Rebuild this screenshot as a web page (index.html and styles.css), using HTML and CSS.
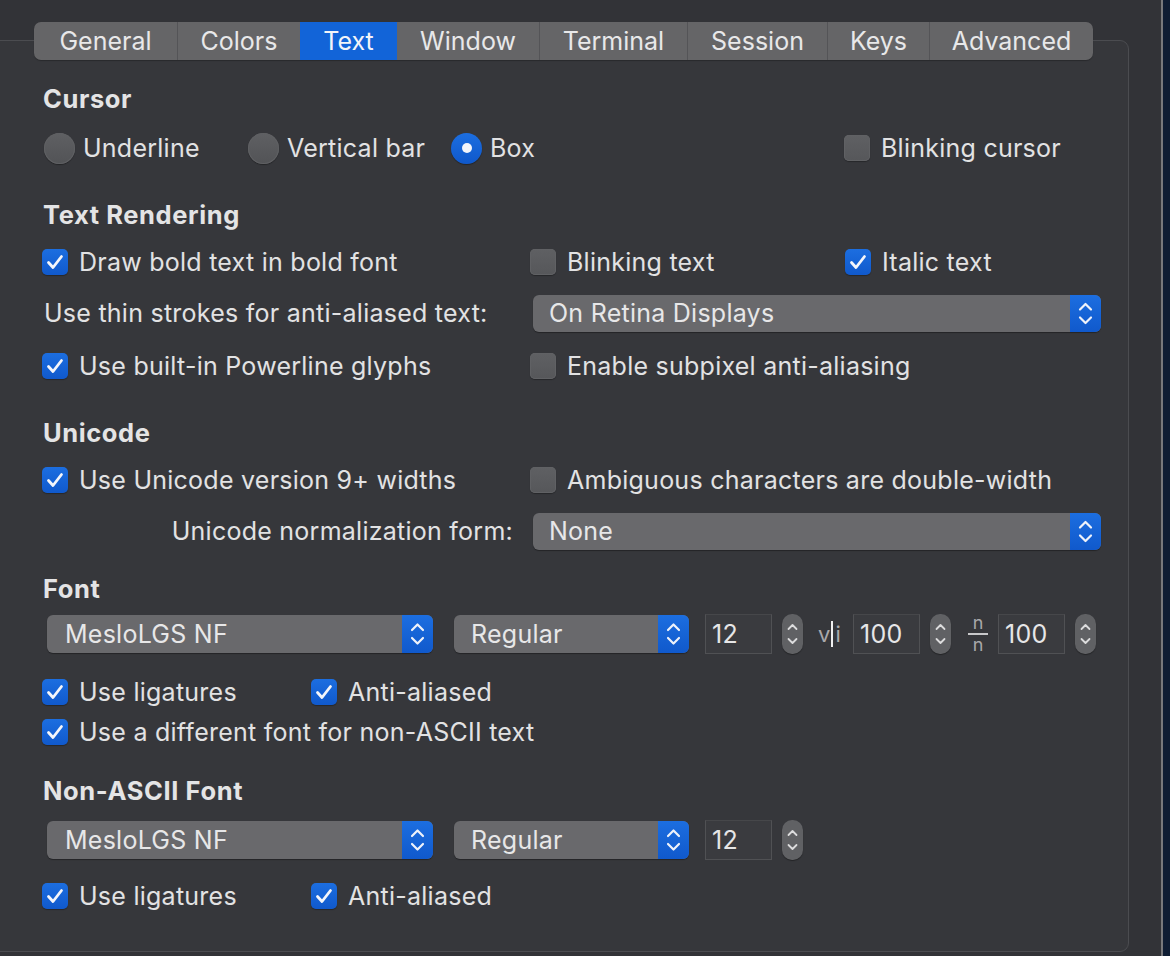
FILE: index.html
```html
<!DOCTYPE html>
<html>
<head>
<meta charset="utf-8">
<link rel="stylesheet" href="styles.css">
</head>
<body>
<div class="screen">
  <div class="window">
    <div class="tabs">
      <div class="tab t-general">General</div>
      <div class="tab t-colors">Colors</div>
      <div class="tab t-text sel">Text</div>
      <div class="tab t-window">Window</div>
      <div class="tab t-terminal">Terminal</div>
      <div class="tab t-session">Session</div>
      <div class="tab t-keys">Keys</div>
      <div class="tab t-advanced">Advanced</div>
    </div>
    <div class="box">
      <div class="heading mt21">Cursor</div>
      <div class="row cursor-row mt11">
        <label class="opt"><span class="radio"></span>Underline</label>
        <label class="opt"><span class="radio"></span>Vertical bar</label>
        <label class="opt"><span class="radio on"></span>Box</label>
        <label class="opt"><span class="cb"></span>Blinking cursor</label>
      </div>

      <div class="heading mt29">Text Rendering</div>
      <div class="row three mt9">
        <label class="opt"><span class="cb on"><svg viewBox="0 0 26 26"><path d="M6.5 13.5 L11 18.5 L19.5 7.5"/></svg></span>Draw bold text in bold font</label>
        <label class="opt"><span class="cb"></span>Blinking text</label>
        <label class="opt"><span class="cb on"><svg viewBox="0 0 26 26"><path d="M6.5 13.5 L11 18.5 L19.5 7.5"/></svg></span>Italic text</label>
      </div>
      <div class="row labeled mt11">
        <div class="lbl">Use thin strokes for anti-aliased text:</div>
        <div class="popup wide"><span class="ptext">On Retina Displays</span><span class="parrow"><svg viewBox="0 0 31 37"><path d="M10 14.5 L15.5 9 L21 14.5"/><path d="M10 22.5 L15.5 28 L21 22.5"/></svg></span></div>
      </div>
      <div class="row three mt13">
        <label class="opt"><span class="cb on"><svg viewBox="0 0 26 26"><path d="M6.5 13.5 L11 18.5 L19.5 7.5"/></svg></span>Use built-in Powerline glyphs</label>
        <label class="opt"><span class="cb"></span>Enable subpixel anti-aliasing</label>
      </div>

      <div class="heading mt29">Unicode</div>
      <div class="row three mt9">
        <label class="opt"><span class="cb on"><svg viewBox="0 0 26 26"><path d="M6.5 13.5 L11 18.5 L19.5 7.5"/></svg></span>Use Unicode version 9+ widths</label>
        <label class="opt span2"><span class="cb"></span>Ambiguous characters are double-width</label>
      </div>
      <div class="row labeled mt11">
        <div class="lbl right">Unicode normalization form:</div>
        <div class="popup wide"><span class="ptext">None</span><span class="parrow"><svg viewBox="0 0 31 37"><path d="M10 14.5 L15.5 9 L21 14.5"/><path d="M10 22.5 L15.5 28 L21 22.5"/></svg></span></div>
      </div>

      <div class="heading mt20">Font</div>
      <div class="row font-row mt5">
        <div class="popup fam"><span class="ptext">MesloLGS NF</span><span class="parrow"><svg viewBox="0 0 31 37"><path d="M10 14.5 L15.5 9 L21 14.5"/><path d="M10 22.5 L15.5 28 L21 22.5"/></svg></span></div>
        <div class="popup style"><span class="ptext">Regular</span><span class="parrow"><svg viewBox="0 0 31 37"><path d="M10 14.5 L15.5 9 L21 14.5"/><path d="M10 22.5 L15.5 28 L21 22.5"/></svg></span></div>
        <div class="field f-size">12</div>
        <div class="stepper"><svg viewBox="0 0 21 40"><path d="M6.5 15 L10.5 11 L14.5 15"/><path d="M6.5 25 L10.5 29 L14.5 25"/></svg></div>
        <div class="vi"><span>v</span><span class="bar"></span><span>i</span></div>
        <div class="field f-sp">100</div>
        <div class="stepper"><svg viewBox="0 0 21 40"><path d="M6.5 15 L10.5 11 L14.5 15"/><path d="M6.5 25 L10.5 29 L14.5 25"/></svg></div>
        <div class="frac"><span class="fn">n</span><span class="fline"></span><span class="fn">n</span></div>
        <div class="field f-lh">100</div>
        <div class="stepper"><svg viewBox="0 0 21 40"><path d="M6.5 15 L10.5 11 L14.5 15"/><path d="M6.5 25 L10.5 29 L14.5 25"/></svg></div>
      </div>
      <div class="row two mt16">
        <label class="opt"><span class="cb on"><svg viewBox="0 0 26 26"><path d="M6.5 13.5 L11 18.5 L19.5 7.5"/></svg></span>Use ligatures</label>
        <label class="opt"><span class="cb on"><svg viewBox="0 0 26 26"><path d="M6.5 13.5 L11 18.5 L19.5 7.5"/></svg></span>Anti-aliased</label>
      </div>
      <div class="row">
        <label class="opt"><span class="cb on"><svg viewBox="0 0 26 26"><path d="M6.5 13.5 L11 18.5 L19.5 7.5"/></svg></span>Use a different font for non-ASCII text</label>
      </div>

      <div class="heading mt21">Non-ASCII Font</div>
      <div class="row font-row mt9">
        <div class="popup fam"><span class="ptext">MesloLGS NF</span><span class="parrow"><svg viewBox="0 0 31 37"><path d="M10 14.5 L15.5 9 L21 14.5"/><path d="M10 22.5 L15.5 28 L21 22.5"/></svg></span></div>
        <div class="popup style"><span class="ptext">Regular</span><span class="parrow"><svg viewBox="0 0 31 37"><path d="M10 14.5 L15.5 9 L21 14.5"/><path d="M10 22.5 L15.5 28 L21 22.5"/></svg></span></div>
        <div class="field f-size">12</div>
        <div class="stepper"><svg viewBox="0 0 21 40"><path d="M6.5 15 L10.5 11 L14.5 15"/><path d="M6.5 25 L10.5 29 L14.5 25"/></svg></div>
      </div>
      <div class="row two mt14">
        <label class="opt"><span class="cb on"><svg viewBox="0 0 26 26"><path d="M6.5 13.5 L11 18.5 L19.5 7.5"/></svg></span>Use ligatures</label>
        <label class="opt"><span class="cb on"><svg viewBox="0 0 26 26"><path d="M6.5 13.5 L11 18.5 L19.5 7.5"/></svg></span>Anti-aliased</label>
      </div>
    </div>
  </div>
  <div class="edge"></div>
  <div class="desk"></div>
</div>
</body>
</html>
```

FILE: styles.css
```css
* { box-sizing: border-box; }
html, body { margin: 0; padding: 0; }
body {
  background: #323337;
  font-family: Inter, "Noto Sans", "Liberation Sans", sans-serif;
  font-size: 25px;
  letter-spacing: 0.25px;
  color: #e2e2e3;
  overflow: hidden;
}
.screen { display: flex; width: 1170px; height: 956px; }
.window { width: 1161px; flex: none; padding-top: 22px; background: #323337; }
.edge { width: 2px; background: #78797c; flex: none; }
.desk { flex: 1; background: #0f1d33; }

.tabs {
  position: relative;
  z-index: 1;
  display: flex;
  height: 38px;
  margin-left: 34px;
  margin-bottom: -20px;
  width: fit-content;
  background: #656567;
  border-radius: 7px;
  overflow: hidden;
  box-shadow: 0 1px 1px rgba(0,0,0,0.25);
}
.tab {
  height: 38px;
  line-height: 38px;
  text-align: center;
  white-space: nowrap;
  border-left: 1px solid #545457;
  color: #e8e8e9;
  letter-spacing: 0;
}
.t-general { width: 143px; border-left: none; }
.t-colors { width: 123px; }
.t-text { width: 96px; }
.t-window { width: 143px; }
.t-terminal { width: 148px; }
.t-session { width: 140px; }
.t-keys { width: 102px; }
.t-advanced { width: 164px; }
.tab.sel { background: #1264d8; border-left-color: #1264d8; color: #f2f4f8; }
.tab.sel + .tab { border-left-color: #1264d8; }

.box {
  margin-left: -10px;
  width: 1139px;
  height: 912px;
  border: 1px solid #4b4c50;
  border-radius: 9px;
  background: #36373b;
  padding: 19px 0 0 51px;
}

.heading { height: 36px; line-height: 36px; font-weight: 700; font-size: 25.5px; letter-spacing: 0.6px; padding-left: 1px; color: #e4e4e5; }
.row { height: 40px; display: flex; align-items: center; }
.mt5 { margin-top: 5px; }
.mt9 { margin-top: 9px; }
.mt11 { margin-top: 11px; }
.mt13 { margin-top: 13px; }
.mt14 { margin-top: 14px; }
.mt16 { margin-top: 16px; }
.mt20 { margin-top: 20px; }
.mt21 { margin-top: 21px; }
.mt29 { margin-top: 29px; }

.opt { display: flex; align-items: center; white-space: nowrap; }
.cursor-row .opt:nth-child(1), .cursor-row .opt:nth-child(2) { width: 204px; padding-left: 2px; }
.cursor-row .opt:nth-child(3) { width: 393px; padding-left: 1px; }
.cursor-row .opt:nth-child(4) { padding-left: 1px; }
.three .opt:nth-child(1) { width: 488px; }
.three .opt:nth-child(2) { width: 315px; }
.two .opt:nth-child(1) { width: 269px; }

.cb {
  width: 26px; height: 26px; flex: none;
  border-radius: 5px;
  margin-right: 11px;
  background: linear-gradient(#5f6063, #56575a);
  box-shadow: inset 0 0 0 1px #606164, 0 1px 1px rgba(0,0,0,0.3);
  display: flex; align-items: center; justify-content: center;
}
.cb.on { background: linear-gradient(#1c6ee0, #1059cc); box-shadow: 0 1px 1px rgba(0,0,0,0.3); }
.cb svg { width: 26px; height: 26px; }
.cb svg path { fill: none; stroke: #f4f6fb; stroke-width: 2.8; stroke-linecap: round; stroke-linejoin: round; }

.radio {
  width: 31px; height: 31px; flex: none; border-radius: 50%;
  margin-right: 8px;
  background: linear-gradient(#5f6063, #525356);
  box-shadow: inset 0 0 0 1px #5f6063, 0 1px 1px rgba(0,0,0,0.35);
  display: flex; align-items: center; justify-content: center;
}
.radio.on { background: linear-gradient(#1c6ee0, #0f58cb); box-shadow: 0 1px 1px rgba(0,0,0,0.35); }
.radio.on::after { content: ""; width: 10px; height: 10px; border-radius: 50%; background: #f3f5fa; }

.labeled .lbl { width: 491px; padding-left: 2px; white-space: nowrap; }
.labeled .lbl.right { text-align: right; padding-right: 20px; }

.popup {
  height: 37px;
  display: flex;
  align-items: center;
  border-radius: 6px;
  background: #69696c;
  box-shadow: 0 1px 1px rgba(0,0,0,0.35);
  overflow: hidden;
  flex: none;
}
.popup .ptext { flex: 1; padding-left: 16px; color: #e7e7e8; white-space: nowrap; }
.popup .parrow { width: 31px; height: 37px; background: linear-gradient(#1c6ee0, #1059cc); flex: none; }
.parrow svg { width: 31px; height: 37px; display: block; }
.parrow svg path { fill: none; stroke: #eef2fa; stroke-width: 2.2; stroke-linecap: round; stroke-linejoin: round; }
.popup.wide { width: 568px; }

.font-row { height: 44px; }
.popup.fam { width: 386px; margin-left: 5px; height: 38px; }
.popup.fam .ptext { padding-left: 18px; }
.popup.style { width: 235px; margin-left: 21px; height: 38px; }
.popup.style .ptext { padding-left: 17px; }
.font-row .parrow { height: 38px; }
.font-row .parrow svg { height: 38px; }

.field {
  width: 67px; height: 40px; flex: none;
  background: #3a3b3f;
  border: 1px solid #505154;
  border-top-color: #46474a;
  padding-left: 6px;
  line-height: 38px;
  color: #e6e6e7;
}
.f-size { margin-left: 16px; }
.f-sp { margin-left: 8px; }
.f-lh { margin-left: 10px; }

.stepper {
  width: 21px; height: 40px; flex: none;
  margin-left: 10px;
  border-radius: 10px;
  background: #606164;
  box-shadow: 0 1px 1px rgba(0,0,0,0.35);
}
.stepper svg { width: 21px; height: 40px; display: block; }
.stepper svg path { fill: none; stroke: #dcdcdd; stroke-width: 1.8; stroke-linecap: round; stroke-linejoin: round; }

.vi {
  margin-left: 15px; width: 27px; flex: none;
  display: flex; align-items: center;
  color: #a9a9ab; font-size: 22px; letter-spacing: 0;
}
.vi .bar { width: 2px; height: 26px; background: #f0f0f0; margin: 0 2px 0 1px; }
.frac {
  margin-left: 17px; width: 20px; flex: none;
  display: flex; flex-direction: column; align-items: center;
  color: #a9a9ab; font-size: 18px; letter-spacing: 0;
}
.frac .fn { display: block; height: 15px; line-height: 13px; overflow: visible; }
.frac .fline { width: 20px; height: 2px; background: #c8c8ca; margin: 2px 0 3px; }
```
